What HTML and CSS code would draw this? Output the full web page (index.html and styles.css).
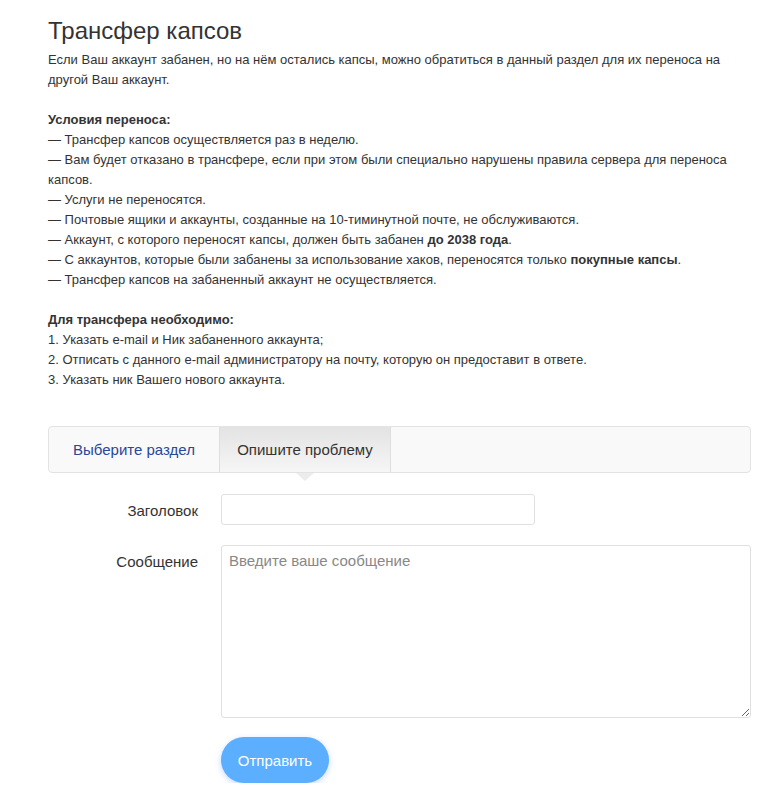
FILE: index.html
```html
<!DOCTYPE html>
<html lang="ru">
<head>
    <meta charset="UTF-8">
    <title>Трансфер капсов</title>
    <link rel="stylesheet" href="styles.css">
</head>
<body>

<div class="page">
    <h1>Трансфер капсов</h1>
    <p>Если Ваш аккаунт забанен, но на нём остались капсы, можно обратиться в данный раздел для их переноса на другой Ваш аккаунт.</p>

    <p>
        <b>Условия переноса:</b><br>
        — Трансфер капсов осуществляется раз в неделю.<br>
        — Вам будет отказано в трансфере, если при этом были специально нарушены правила сервера для переноса капсов.<br>
        — Услуги не переносятся.<br>
        — Почтовые ящики и аккаунты, созданные на 10-тиминутной почте, не обслуживаются.<br>
        — Аккаунт, с которого переносят капсы, должен быть забанен <b>до 2038 года</b>.<br>
        — С аккаунтов, которые были забанены за использование хаков, переносятся только <b>покупные капсы</b>.<br>
        — Трансфер капсов на забаненный аккаунт не осуществляется.
    </p>

    <p>
        <b>Для трансфера необходимо:</b><br>
        1. Указать e-mail и Ник забаненного аккаунта;<br>
        2. Отписать с данного e-mail администратору на почту, которую он предоставит в ответе.<br>
        3. Указать ник Вашего нового аккаунта.
    </p>

    <div class="tabs">
        <a class="tab" href="#">Выберите раздел</a>
        <a class="tab active" href="#">Опишите проблему</a>
    </div>

    <form class="ticket-form" onsubmit="event.preventDefault()">
        <label for="title">Заголовок</label>
        <input type="text" id="title" class="field field-title">

        <label for="message">Сообщение</label>
        <textarea id="message" class="field field-message" placeholder="Введите ваше сообщение"></textarea>

        <span></span>
        <div>
            <button type="submit" class="send-button">Отправить</button>
        </div>
    </form>
</div>

</body>
</html>
```

FILE: styles.css
```css
body {
    font-family: "Liberation Sans", Arial, sans-serif;
    color: #333;
    background-color: #fff;
    margin: 0;
}
.page {
    width: 703px;
    padding: 16px 0 0 48px;
}
h1 {
    font-size: 24px;
    font-weight: normal;
    line-height: 30px;
    margin: 0 0 4px;
    color: #333;
}
p {
    font-size: 13px;
    line-height: 20px;
    margin: 0 0 20px;
}
.tabs {
    display: flex;
    height: 45px;
    margin-top: 36px;
    background-color: #f9f9f9;
    border: 1px solid #e3e3e3;
    border-radius: 4px;
}
.tab {
    display: flex;
    align-items: center;
    justify-content: center;
    width: 170px;
    font-size: 15px;
    color: #28479b;
    text-decoration: none;
    position: relative;
}
.tab.active {
    color: #333;
    background: linear-gradient(#e3e3e3, #f6f6f6);
    border-left: 1px solid #dedede;
    border-right: 1px solid #dedede;
}
.tab.active::after {
    content: "";
    position: absolute;
    left: 50%;
    bottom: -9px;
    margin-left: -9px;
    border-left: 9px solid transparent;
    border-right: 9px solid transparent;
    border-top: 8px solid #ececec;
}
.ticket-form {
    display: grid;
    grid-template-columns: 150px 1fr;
    column-gap: 23px;
    row-gap: 20px;
    margin-top: 21px;
}
.ticket-form label {
    text-align: right;
    font-size: 15px;
    line-height: 20px;
    padding-top: 7px;
}
.field {
    font-family: "Liberation Sans", Arial, sans-serif;
    font-size: 15px;
    color: #333;
    border: 1px solid #e0e0e0;
    border-radius: 3px;
    box-sizing: border-box;
    padding: 6px 7px;
}
.field-title {
    width: 314px;
    height: 31px;
}
.field-message {
    width: 530px;
    height: 173px;
    resize: vertical;
}
.field-message::placeholder {
    color: #888;
}
.send-button {
    width: 108px;
    height: 46px;
    margin-top: -1px;
    border: none;
    border-radius: 23px;
    background-color: #5caeff;
    color: white;
    font-family: "Liberation Sans", Arial, sans-serif;
    font-size: 15px;
    box-shadow: 0 2px 6px rgba(92, 150, 255, 0.35);
    cursor: pointer;
}
```
